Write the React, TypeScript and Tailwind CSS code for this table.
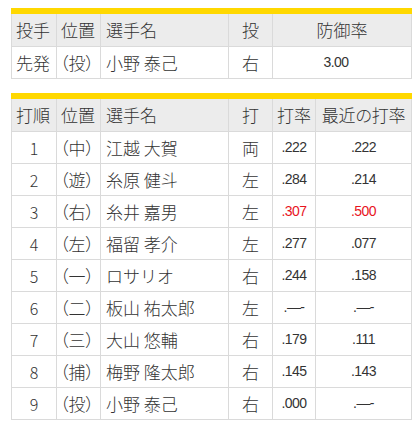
const jp = "font-['Noto_Sans_CJK_JP','Noto_Sans',sans-serif] font-light";
const num = "font-['Liberation_Sans',Arial,sans-serif]";

type Batter = {
  order: string;
  pos: string;
  name: string;
  hand: string;
  avg: string;
  recent: string;
  hot?: boolean;
};

const batters: Batter[] = [
  { order: "1", pos: "（中）", name: "江越 大賀", hand: "両", avg: ".222", recent: ".222" },
  { order: "2", pos: "（遊）", name: "糸原 健斗", hand: "左", avg: ".284", recent: ".214" },
  { order: "3", pos: "（右）", name: "糸井 嘉男", hand: "左", avg: ".307", recent: ".500", hot: true },
  { order: "4", pos: "（左）", name: "福留 孝介", hand: "左", avg: ".277", recent: ".077" },
  { order: "5", pos: "（一）", name: "ロサリオ", hand: "右", avg: ".244", recent: ".158" },
  { order: "6", pos: "（二）", name: "板山 祐太郎", hand: "左", avg: ".—-", recent: ".—-" },
  { order: "7", pos: "（三）", name: "大山 悠輔", hand: "右", avg: ".179", recent: ".111" },
  { order: "8", pos: "（捕）", name: "梅野 隆太郎", hand: "右", avg: ".145", recent: ".143" },
  { order: "9", pos: "（投）", name: "小野 泰己", hand: "右", avg: ".000", recent: ".—-" },
];

const cell = "flex items-center border-r border-b border-[#dadada] text-[#333]";
const head = `${cell} h-[33px] bg-[#ececec] text-[17px] ${jp}`;
const body = `${cell} h-[32px] bg-white`;

export default function App() {
  return (
    <div className="w-[417px] h-[430px] bg-white pt-2 pl-[11px]">
      {/* 予告先発 */}
      <div className="w-[401px]">
        <div className="h-[6px] bg-[#ffd800]" />
        <div className="grid grid-cols-[46px_44px_128px_44px_139px]">
          <div className={`${head} border-l pl-[4px]`}>投手</div>
          <div className={`${head} pl-[4px]`}>位置</div>
          <div className={`${head} pl-[5px]`}>選手名</div>
          <div className={`${head} justify-center`}>投</div>
          <div className={`${head} justify-center`}>防御率</div>

          <div className={`${body} border-l pl-[4px] text-[17px] ${jp}`}>先発</div>
          <div className={`${body} text-[17px] ${jp} [font-feature-settings:'palt'] pl-[3px]`}>（投）</div>
          <div className={`${body} pl-[5px] text-[17px] text-[#1d65b3] ${jp}`}>小野 泰己</div>
          <div className={`${body} justify-center text-[17px] ${jp}`}>右</div>
          <div className={`${body} justify-center pr-3 text-[14px] tracking-[-0.6px] ${num}`}>3.00</div>
        </div>
      </div>

      {/* スタメン */}
      <div className="w-[401px] mt-[14px]">
        <div className="h-[6px] bg-[#ffd800]" />
        <div className="grid grid-cols-[46px_44px_128px_44px_43px_96px]">
          <div className={`${head} border-l pl-[4px]`}>打順</div>
          <div className={`${head} pl-[4px]`}>位置</div>
          <div className={`${head} pl-[5px]`}>選手名</div>
          <div className={`${head} justify-center`}>打</div>
          <div className={`${head} justify-center`}>打率</div>
          <div className={`${head} justify-center tracking-[-0.3px]`}>最近の打率</div>

          {batters.map((b) => (
            <Row key={b.order} b={b} />
          ))}
        </div>
      </div>
    </div>
  );
}

function Row({ b }: { b: Batter }) {
  const numColor = b.hot ? "text-[#e8141e]" : "text-[#333]";
  return (
    <>
      <div className={`${body} border-l justify-center text-[16px] ${jp}`}>{b.order}</div>
      <div className={`${body} text-[17px] ${jp} [font-feature-settings:'palt'] pl-[3px]`}>{b.pos}</div>
      <div className={`${body} pl-[5px] text-[17px] text-[#1d65b3] ${jp}`}>{b.name}</div>
      <div className={`${body} justify-center text-[17px] ${jp}`}>{b.hand}</div>
      <div className={`${body} justify-center text-[14px] tracking-[-0.6px] ${num}`}>
        <span className={numColor}>{b.avg}</span>
      </div>
      <div className={`${body} justify-center text-[14px] tracking-[-0.6px] ${num}`}>
        <span className={numColor}>{b.recent}</span>
      </div>
    </>
  );
}
